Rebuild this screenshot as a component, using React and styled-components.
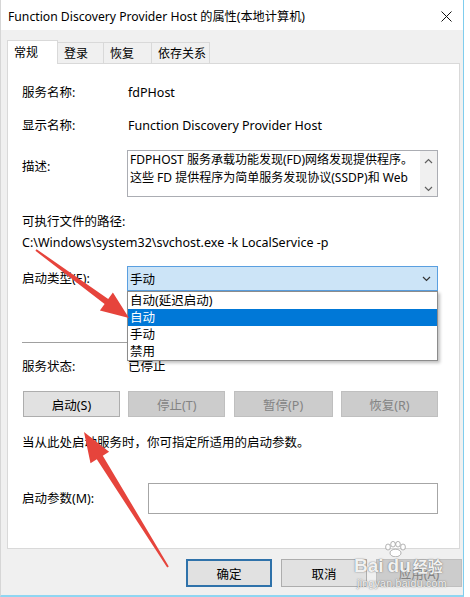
import React from "react";
import styled, { createGlobalStyle } from "styled-components";

const Global = createGlobalStyle`
  html, body { margin: 0; padding: 0; background: #ffffff; }
  body {
    font-family: "Noto Sans", "Noto Sans CJK SC", sans-serif;
    font-size: 12.5px;
    color: #000;
  }
  * { box-sizing: border-box; }
`;

const Window = styled.div`
  position: relative;
  width: 464px;
  height: 597px;
  border-left: 1px solid #d6d6d6;
  border-right: 1px solid #7fcdee;
  border-bottom: 2px solid #8fd6f2;
  background: #f0f0f0;
  display: flex;
  flex-direction: column;
  overflow: hidden;
`;

const TitleBar = styled.div`
  height: 30px;
  background: #ffffff;
  display: flex;
  align-items: center;
  justify-content: space-between;
  padding: 2px 0 0 7px;
  font-size: 12.2px;
  color: #000;
`;

const CloseBox = styled.div`
  width: 34px;
  height: 28px;
  display: flex;
  align-items: center;
  justify-content: center;
`;

const Body = styled.div`
  flex: 1;
  display: flex;
  flex-direction: column;
  padding: 10px 3px 0 6px;
`;

const Tabs = styled.div`
  display: flex;
  align-items: flex-end;
  height: 24px;
  position: relative;
  z-index: 2;
  font-size: 12px;
`;

const Tab = styled.div`
  width: ${(p) => p.$w}px;
  height: ${(p) => (p.$active ? 24 : 22)}px;
  margin-right: -1px;
  border: 1px solid #d9d9d9;
  border-bottom: ${(p) => (p.$active ? "none" : "1px solid #d9d9d9")};
  background: ${(p) => (p.$active ? "#ffffff" : "#f0f0f0")};
  padding: ${(p) => (p.$active ? "3px" : "2px")} 0 0 6px;
  line-height: 18px;
  position: relative;
  z-index: ${(p) => (p.$active ? 2 : 1)};
`;

const Panel = styled.div`
  width: 453px;
  height: 486px;
  margin-top: -1px;
  border: 1px solid #d9d9d9;
  background: #ffffff;
  padding: 0 0 0 14px;
  display: flex;
  flex-direction: column;
`;

const Row = styled.div`
  display: grid;
  grid-template-columns: ${(p) => p.$label || 105}px ${(p) => 416 - (p.$label || 105)}px;
  align-items: ${(p) => p.$align || "center"};
  margin-top: ${(p) => p.$mt || 0}px;
  min-height: ${(p) => p.$h || 20}px;
  position: relative;
`;

const Label = styled.div`
  line-height: 20px;
  padding-top: ${(p) => p.$pt || 0}px;
  white-space: nowrap;
`;

const Value = styled.div`
  line-height: 20px;
  padding-left: 1px;
  white-space: nowrap;
`;

const Line = styled.div`
  line-height: 20px;
  margin-top: ${(p) => p.$mt || 0}px;
  white-space: nowrap;
`;

const DescBox = styled.div`
  height: 47px;
  border: 1px solid #abadb3;
  display: flex;
`;

const DescText = styled.div`
  flex: 1;
  padding: 0 2px;
  font-size: 12px;
  line-height: 18px;
  white-space: nowrap;
  overflow: hidden;
`;

const ScrollBar = styled.div`
  width: 17px;
  background: #f0f0f0;
  display: flex;
  flex-direction: column;
  justify-content: space-between;
  align-items: center;
  padding: 7px 0 4px;
`;

const ComboWrap = styled.div`
  position: relative;
`;

const Combo = styled.div`
  height: 25px;
  border: 1px solid #5a9fe0;
  background: #cce4f7;
  display: flex;
  align-items: center;
  justify-content: space-between;
  padding: 0 6px 0 2px;
`;

const DropList = styled.div`
  position: absolute;
  top: 25px;
  left: 0;
  width: 100%;
  background: #ffffff;
  border: 1px solid #8c8c8c;
  box-shadow: 2px 2px 3px rgba(0, 0, 0, 0.25);
  z-index: 5;
`;

const DropItem = styled.div`
  height: 17px;
  line-height: 17px;
  padding-left: 2px;
  background: ${(p) => (p.$sel ? "#0078d7" : "#ffffff")};
  color: ${(p) => (p.$sel ? "#ffffff" : "#000000")};
`;

const Separator = styled.div`
  height: 1px;
  width: 416px;
  background: #a0a0a0;
  margin-top: ${(p) => p.$mt}px;
`;

const ButtonRow = styled.div`
  display: flex;
  justify-content: space-between;
  width: 416px;
  padding-left: 1px;
  margin-top: ${(p) => p.$mt}px;
`;

const Button = styled.div`
  width: ${(p) => p.$w || 97}px;
  height: ${(p) => p.$h || 26}px;
  display: flex;
  align-items: center;
  justify-content: center;
  background: ${(p) => (p.$disabled ? "#cccccc" : "#e1e1e1")};
  border: ${(p) =>
    p.$default ? "2px solid #2f72aa" : p.$disabled ? "1px solid #bfbfbf" : "1px solid #adadad"};
  color: ${(p) => (p.$disabled ? "#838383" : "#000")};
`;

const Input = styled.div`
  height: 31px;
  border: 1px solid #a6a6a6;
  background: #fff;
`;

const Footer = styled.div`
  display: flex;
  justify-content: flex-end;
  gap: 9px;
  margin-top: 10px;
  margin-right: -2px;
`;

const Overlay = styled.svg`
  position: absolute;
  left: 0;
  top: 0;
  pointer-events: none;
  z-index: 10;
`;

const Watermark = styled.div`
  position: absolute;
  left: 353px;
  top: 541px;
  z-index: 11;
  color: rgba(255, 255, 255, 0.92);
  text-shadow: 0 0 1px rgba(90, 90, 90, 0.8), 0 0 2px rgba(120, 120, 120, 0.5);
  pointer-events: none;
  display: flex;
  flex-direction: column;
`;

const Paw = styled.svg`
  margin-left: 28px;
  display: block;
`;

const WmMain = styled.div`
  display: flex;
  align-items: baseline;
  margin-top: -1px;
  font-family: "Liberation Sans", Arial, sans-serif;
  font-weight: bold;
  font-size: 19px;
  line-height: 20px;
`;

const WmDu = styled.span`
  margin-left: 4px;
`;

const WmCn = styled.span`
  font-family: "Noto Sans CJK SC", sans-serif;
  font-weight: bold;
  font-size: 15px;
  margin-left: 2px;
`;

const WmSub = styled.div`
  font-family: "Liberation Sans", Arial, sans-serif;
  font-size: 10.5px;
  line-height: 12px;
  margin-top: 1px;
  padding-left: 3px;
  letter-spacing: 0.3px;
`;

const Chevron = ({ up, color = "#606060" }) => (
  <svg width="9" height="6" viewBox="0 0 9 6">
    <path
      d={up ? "M1 5 L4.5 1.5 L8 5" : "M1 1 L4.5 4.5 L8 1"}
      fill="none"
      stroke={color}
      strokeWidth="1.2"
    />
  </svg>
);

export default function App() {
  return (
    <>
      <Global />
      <Window>
        <TitleBar>
          <span>Function Discovery Provider Host 的属性(本地计算机)</span>
          <CloseBox>
            <svg width="11" height="11" viewBox="0 0 11 11">
              <path d="M0.5 0.5 L10.5 10.5 M10.5 0.5 L0.5 10.5" stroke="#111" strokeWidth="1" />
            </svg>
          </CloseBox>
        </TitleBar>
        <Body>
          <Tabs>
            <Tab $w={51} $active>常规</Tab>
            <Tab $w={47}>登录</Tab>
            <Tab $w={49}>恢复</Tab>
            <Tab $w={59}>依存关系</Tab>
          </Tabs>
          <Panel>
            <Row $mt={19}>
              <Label>服务名称:</Label>
              <Value>fdPHost</Value>
            </Row>
            <Row $mt={13}>
              <Label>显示名称:</Label>
              <Value>Function Discovery Provider Host</Value>
            </Row>
            <Row $mt={14} $align="start">
              <Label $pt={7}>描述:</Label>
              <DescBox>
                <DescText>
                  FDPHOST 服务承载功能发现(FD)网络发现提供程序。
                  <br />
                  这些 FD 提供程序为简单服务发现协议(SSDP)和 Web
                </DescText>
                <ScrollBar>
                  <Chevron up />
                  <Chevron />
                </ScrollBar>
              </DescBox>
            </Row>
            <Line $mt={15}>可执行文件的路径:</Line>
            <Line $mt={1}>C:\Windows\system32\svchost.exe -k LocalService -p</Line>
            <Row $mt={13} $h={25}>
              <Label>启动类型(E):</Label>
              <ComboWrap>
                <Combo>
                  <span>手动</span>
                  <Chevron color="#333" />
                </Combo>
                <DropList>
                  <DropItem>自动(延迟启动)</DropItem>
                  <DropItem $sel>自动</DropItem>
                  <DropItem>手动</DropItem>
                  <DropItem>禁用</DropItem>
                </DropList>
              </ComboWrap>
            </Row>
            <Separator $mt={51} />
            <Row $mt={14}>
              <Label>服务状态:</Label>
              <Value>已停止</Value>
            </Row>
            <ButtonRow $mt={14}>
              <Button>启动(S)</Button>
              <Button $disabled>停止(T)</Button>
              <Button $disabled $w={99}>暂停(P)</Button>
              <Button $disabled>恢复(R)</Button>
            </ButtonRow>
            <Line $mt={16}>当从此处启动服务时，你可指定所适用的启动参数。</Line>
            <Row $mt={30} $h={31} $label={126}>
              <Label>启动参数(M):</Label>
              <Input />
            </Row>
          </Panel>
          <Footer>
            <Button $w={86} $h={28} $default>确定</Button>
            <Button $w={86} $h={28}>取消</Button>
            <Button $w={86} $h={28} $disabled>应用(A)</Button>
          </Footer>
        </Body>
        <Overlay width="464" height="597" viewBox="0 0 464 597">
          <polygon
            points="35.6,249.2 107.2,299.1 111.9,292.6 128,318 98.9,310.4 103.6,303.9 34.4,250.8"
            fill="#e6443c"
          />
          <polygon
            points="167.8,566.5 101.8,455.7 108.1,451.7 83,432 89.5,463.3 95.8,459.3 166.2,567.5"
            fill="#e6443c"
          />
        </Overlay>
        <Watermark>
          <Paw width="26" height="16" viewBox="0 0 26 16">
            <g fill="rgba(255,255,255,0.95)" stroke="rgba(100,100,100,0.6)" strokeWidth="0.8">
              <ellipse cx="6" cy="6" rx="2.4" ry="3" />
              <ellipse cx="11" cy="3.2" rx="2.3" ry="2.8" />
              <ellipse cx="16" cy="3.2" rx="2.3" ry="2.8" />
              <ellipse cx="21" cy="6" rx="2.4" ry="3" />
              <ellipse cx="13.5" cy="12" rx="5.5" ry="3.8" />
            </g>
          </Paw>
          <WmMain>
            <span>Bai</span>
            <WmDu>du</WmDu>
            <WmCn>经验</WmCn>
          </WmMain>
          <WmSub>jingyan.baidu.com</WmSub>
        </Watermark>
      </Window>
    </>
  );
}
